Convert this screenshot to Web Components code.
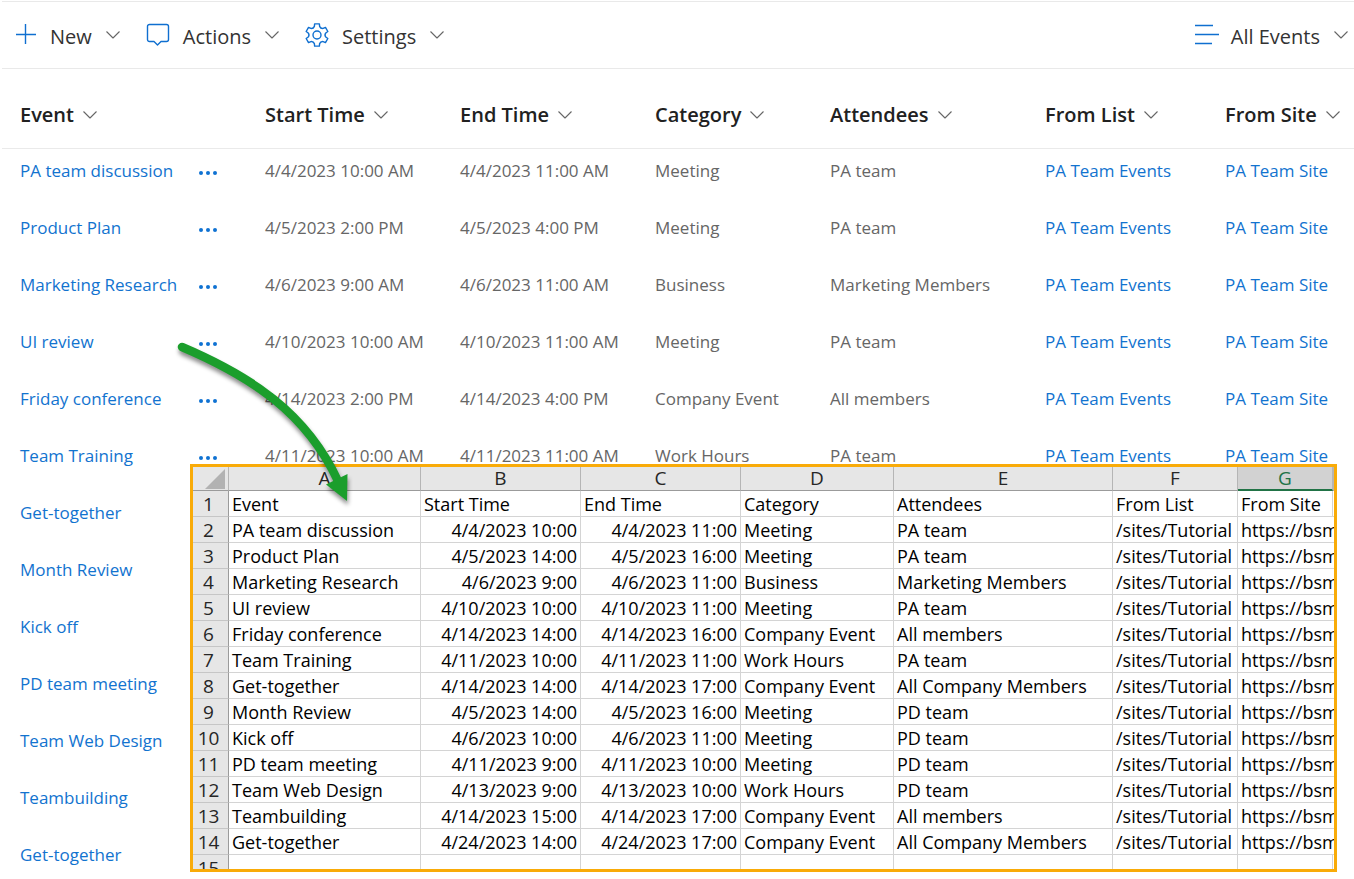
<!DOCTYPE html>
<html lang="en">
<head>
<meta charset="utf-8">
<title>Events</title>
<style>
  body { margin: 0; background: #fff; color: #212121; font-family: "Open Sans", "Noto Sans", sans-serif; }
</style>
</head>
<body>
<events-page></events-page>
<script>
const GEAR = (() => {
  const at = (deg, r) => { const a = deg * Math.PI / 180; return (12 + r * Math.sin(a)).toFixed(2) + ' ' + (12 - r * Math.cos(a)).toFixed(2); };
  let d = 'M' + at(-12, 11.4);
  for (let c = 0; c < 360; c += 60) {
    d += `L${at(c + 12, 11.4)}L${at(c + 17, 9)}Q${at(c + 30, 7.2)} ${at(c + 43, 9)}L${at(c + 48, 11.4)}`;
  }
  return `<circle cx="12" cy="12" r="4"/><path d="${d}z"/>`;
})();
const ICONS = {
  plus: ['24', '<path d="M12.500 1v20M3 11.500h20"/>'],
  comment: ['24', '<path d="M3.500 1.500h17a2 2 0 0 1 2 2v13a2 2 0 0 1-2 2h-5.500l-3.500 3.500-3.500-3.500h-4.500a2 2 0 0 1-2-2V3.500a2 2 0 0 1 2-2z"/>'],
  gear: ['24', GEAR],
  lines: ['24', '<path d="M1 2.500h18M1 11.500h24M1 20.500h17"/>'],
  chevron: ['16', '<path d="M1.500 4.500 8 11l6.500-6.500"/>']
};

class UiIcon extends HTMLElement {
  connectedCallback() {
    const [size, shape] = ICONS[this.getAttribute('name')];
    this.attachShadow({ mode: 'open' }).innerHTML = `
      <style>
        :host { display: block; flex: none; width: ${size}px; height: ${size}px; }
        svg { display: block; overflow: visible; fill: none; stroke: currentColor;
              stroke-width: ${size === '16' ? 1.1 : 1.4}; stroke-linejoin: round; }
      </style>
      <svg width="${size}" height="${size}" viewBox="0 0 ${size} ${size}" aria-hidden="true">${shape}</svg>`;
  }
}
customElements.define('ui-icon', UiIcon);

class MenuButton extends HTMLElement {
  connectedCallback() {
    this.attachShadow({ mode: 'open' }).innerHTML = `
      <style>
        :host { display: block; }
        button { display: flex; align-items: center; gap: 13px; padding: 0; border: 0; background: none;
                 font: 20px/28px "Open Sans", "Noto Sans", sans-serif; color: #333; white-space: nowrap; cursor: pointer; }
        span { padding-top: 3px; }
        .icon { color: #0f6fd0; }
        .chev { color: #666; }
      </style>
      <button type="button" aria-haspopup="menu">
        <ui-icon class="icon" name="${this.getAttribute('icon')}"></ui-icon>
        <span><slot></slot></span>
        <ui-icon class="chev" name="chevron"></ui-icon>
      </button>`;
  }
}
customElements.define('menu-button', MenuButton);

class CommandBar extends HTMLElement {
  connectedCallback() {
    this.attachShadow({ mode: 'open' }).innerHTML = `
      <style>
        :host { display: flex; align-items: center; justify-content: space-between; box-sizing: border-box;
                height: 68px; margin: 1px 0 0 2px; padding: 0 5px 0 11px;
                border-top: 1px solid #e9e9e9; border-bottom: 1px solid #e9e9e9; }
        div { display: flex; gap: 25px; }
      </style>
      <div><slot></slot></div>
      <slot name="view"></slot>`;
  }
}
customElements.define('command-bar', CommandBar);

const HEADS = ['Event', 'Start Time', 'End Time', 'Category', 'Attendees', 'From List', 'From Site'];
const SHEET = [
  ['PA team discussion', '4/4/2023 10:00', '4/4/2023 11:00', 'Meeting', 'PA team'],
  ['Product Plan', '4/5/2023 14:00', '4/5/2023 16:00', 'Meeting', 'PA team'],
  ['Marketing Research', '4/6/2023 9:00', '4/6/2023 11:00', 'Business', 'Marketing Members'],
  ['UI review', '4/10/2023 10:00', '4/10/2023 11:00', 'Meeting', 'PA team'],
  ['Friday conference', '4/14/2023 14:00', '4/14/2023 16:00', 'Company Event', 'All members'],
  ['Team Training', '4/11/2023 10:00', '4/11/2023 11:00', 'Work Hours', 'PA team'],
  ['Get-together', '4/14/2023 14:00', '4/14/2023 17:00', 'Company Event', 'All Company Members'],
  ['Month Review', '4/5/2023 14:00', '4/5/2023 16:00', 'Meeting', 'PD team'],
  ['Kick off', '4/6/2023 10:00', '4/6/2023 11:00', 'Meeting', 'PD team'],
  ['PD team meeting', '4/11/2023 9:00', '4/11/2023 10:00', 'Meeting', 'PD team'],
  ['Team Web Design', '4/13/2023 9:00', '4/13/2023 10:00', 'Work Hours', 'PD team'],
  ['Teambuilding', '4/14/2023 15:00', '4/14/2023 17:00', 'Company Event', 'All members'],
  ['Get-together', '4/24/2023 14:00', '4/24/2023 17:00', 'Company Event', 'All Company Members']
];
const TIMES = [
  ['4/4/2023 10:00 AM', '4/4/2023 11:00 AM'],
  ['4/5/2023 2:00 PM', '4/5/2023 4:00 PM'],
  ['4/6/2023 9:00 AM', '4/6/2023 11:00 AM'],
  ['4/10/2023 10:00 AM', '4/10/2023 11:00 AM'],
  ['4/14/2023 2:00 PM', '4/14/2023 4:00 PM'],
  ['4/11/2023 10:00 AM', '4/11/2023 11:00 AM']
];

class EventList extends HTMLElement {
  connectedCallback() {
    const widths = [178, 67, 195, 195, 175, 215, 180];
    const rows = SHEET.map((r, i) => {
      const name = `<td><a href="#">${r[0]}</a></td>`;
      if (!TIMES[i]) return `<tr>${name}<td colspan="7"></td></tr>`;
      return `<tr>${name}<td><button type="button" aria-label="More"><svg width="20" height="6" viewBox="0 0 20 6"><circle cx="3" cy="3" r="2"/><circle cx="10" cy="3" r="2"/><circle cx="17" cy="3" r="2"/></svg></button></td>
        <td>${TIMES[i][0]}</td><td>${TIMES[i][1]}</td><td>${r[3]}</td><td>${r[4]}</td>
        <td><a href="#">PA Team Events</a></td><td><a href="#">PA Team Site</a></td></tr>`;
    }).join('');
    this.attachShadow({ mode: 'open' }).innerHTML = `
      <style>
        :host { display: block; margin: 0 0 0 2px; }
        table { width: 100%; table-layout: fixed; border-collapse: collapse; font-size: 17px; line-height: 24px; color: #666; }
        th { height: 79px; padding: 0 0 0 18px; border-bottom: 1px solid #eaeaea; text-align: left; vertical-align: middle; }
        th button { display: flex; align-items: center; gap: 8px; padding: 13px 0 0; border: 0; background: none;
                    font: 600 20px/28px "Open Sans", "Noto Sans", sans-serif; color: #212121; white-space: nowrap; }
        th ui-icon { color: #666; }
        td { height: 24px; padding: 10px 0 23px 18px; vertical-align: top; white-space: nowrap; }
        tr:last-child td { padding-bottom: 12px; }
        a { color: #1273cf; text-decoration: none; }
        td button { display: block; padding: 11px 0 0; border: 0; background: none; }
        td svg { display: block; fill: #0f72d2; }
      </style>
      <table>
        <colgroup>${widths.map(w => `<col style="width:${w}px">`).join('')}<col></colgroup>
        <thead><tr>${HEADS.map((h, i) => `<th${i ? '' : ' colspan="2"'}><button type="button">${h}<ui-icon name="chevron"></ui-icon></button></th>`).join('')}</tr></thead>
        <tbody>${rows}</tbody>
      </table>`;
  }
}
customElements.define('event-list', EventList);

class ExportSheet extends HTMLElement {
  connectedCallback() {
    const widths = [36, 192, 160, 160, 153, 219, 125, 95];
    const body = SHEET.map((r, i) => `<tr><th>${i + 2}</th><td>${r[0]}</td><td class="n">${r[1]}</td><td class="n">${r[2]}</td><td>${r[3]}</td><td>${r[4]}</td><td>/sites/Tutorial</td><td colspan="2">https://bsm</td></tr>`).join('');
    this.attachShadow({ mode: 'open' }).innerHTML = `
      <style>
        :host { display: block; box-sizing: border-box; border: 3px solid #f9ab08; background: #fff; overflow: hidden; }
        table { width: 100%; table-layout: fixed; border-collapse: separate; border-spacing: 0;
                font-size: 18px; line-height: 23px; color: #000; }
        th { box-sizing: border-box; padding: 0; font-weight: 400; font-size: 19px; background: #e6e6e6; text-align: center; }
        thead th { height: 24px; line-height: 23px; border-right: 1px solid #b5b5b5; border-bottom: 1px solid #9b9b9b; color: #262626; }
        thead th.sel { background: #d2d2d2; border-bottom: 2px solid #217346; color: #217346; line-height: 22px; }
        tbody th { height: 26px; color: #262626; border-right: 1px solid #9b9b9b; border-bottom: 1px solid #c6c6c6; padding: 2px 4px 0 0; }
        td { box-sizing: border-box; height: 26px; padding: 2px 2px 0 3px; border-right: 1px solid #d4d4d4; border-bottom: 1px solid #d4d4d4;
             white-space: nowrap; overflow: hidden; }
        td.n { text-align: right; padding-right: 3px; }
        td:last-child { border-right: 0; }
        svg { display: block; margin-left: 12px; fill: #b2b2b2; }
      </style>
      <table>
        <colgroup>${widths.map(w => `<col style="width:${w}px">`).join('')}<col></colgroup>
        <thead><tr><th><svg width="20" height="20" viewBox="0 0 20 20"><path d="M20 0v20H0z"/></svg></th>
          ${'ABCDEF'.split('').map(c => `<th>${c}</th>`).join('')}<th class="sel">G</th><th></th></tr></thead>
        <tbody>
          <tr><th>1</th>${HEADS.map(h => `<td>${h}</td>`).join('')}<td></td></tr>
          ${body}
          <tr><th>15</th>${'<td></td>'.repeat(8)}</tr>
        </tbody>
      </table>`;
  }
}
customElements.define('export-sheet', ExportSheet);

class FlowArrow extends HTMLElement {
  connectedCallback() {
    this.attachShadow({ mode: 'open' }).innerHTML = `
      <style>
        :host { display: block; pointer-events: none; }
        svg { display: block; overflow: visible; filter: drop-shadow(1px 4px 2px rgba(0,0,0,.45)); }
      </style>
      <svg width="180" height="165" viewBox="175 340 180 165" aria-hidden="true">
        <path d="M182 347C250 376 306 412 338 481" fill="none" stroke="#1b9e2c" stroke-width="8.500" stroke-linecap="round"/>
        <path d="M347 501 326 484.500 347.500 474z" fill="#1b9e2c"/>
      </svg>`;
  }
}
customElements.define('flow-arrow', FlowArrow);

class EventsPage extends HTMLElement {
  connectedCallback() {
    this.attachShadow({ mode: 'open' }).innerHTML = `
      <style>
        :host { display: block; position: relative; overflow: hidden; }
        export-sheet { position: absolute; left: 190px; right: 17px; top: 464px; height: 408px; }
        flow-arrow { position: absolute; left: 175px; top: 340px; }
      </style>
      <command-bar>
        <menu-button icon="plus">New</menu-button>
        <menu-button icon="comment">Actions</menu-button>
        <menu-button icon="gear">Settings</menu-button>
        <menu-button icon="lines" slot="view">All Events</menu-button>
      </command-bar>
      <event-list></event-list>
      <export-sheet></export-sheet>
      <flow-arrow></flow-arrow>`;
  }
}
customElements.define('events-page', EventsPage);
</script>
</body>
</html>
